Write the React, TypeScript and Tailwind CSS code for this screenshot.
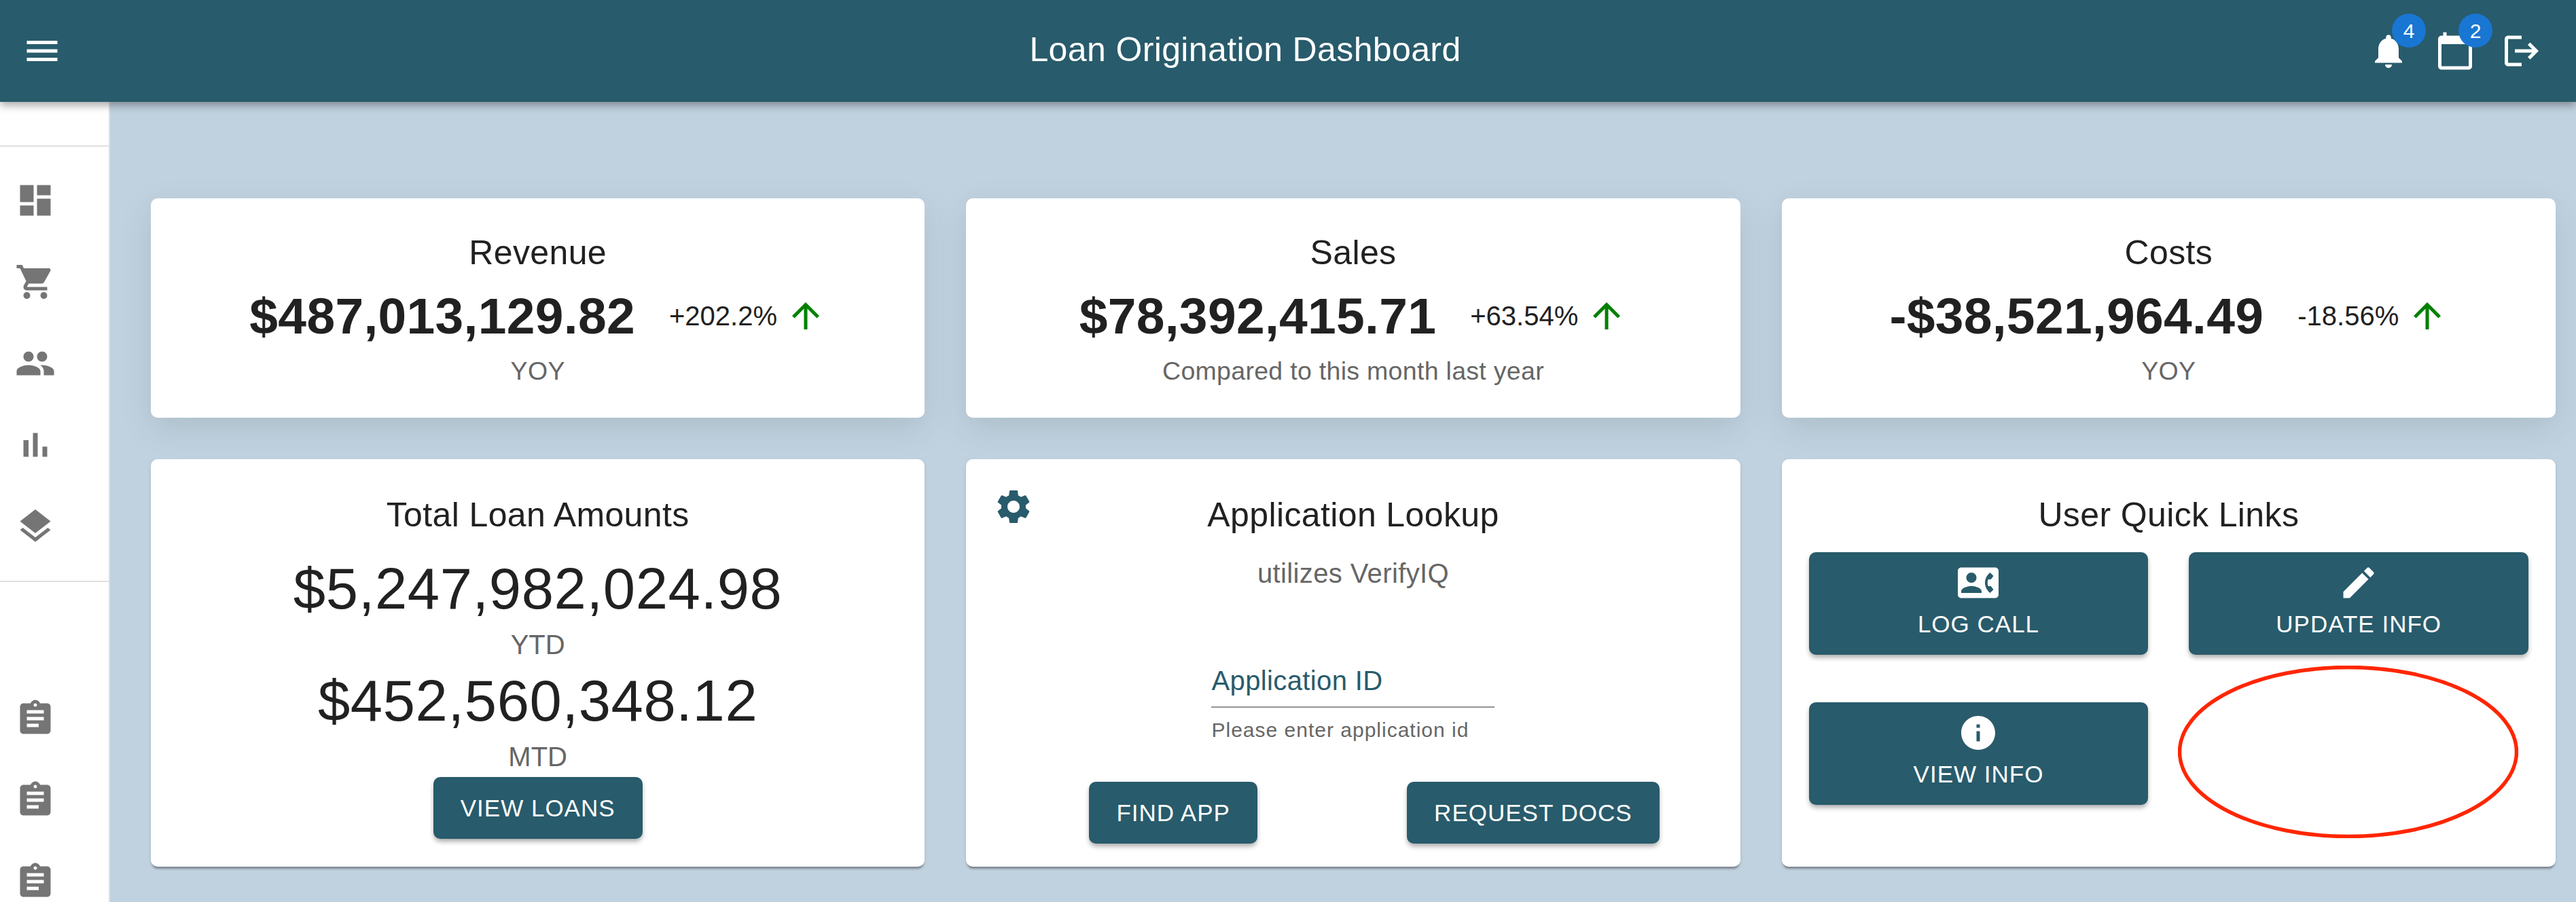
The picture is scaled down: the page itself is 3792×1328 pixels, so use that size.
const TEAL = 'bg-[#285b6b]'

const ICONS = {
  menu: 'M3 18h18v-2H3v2zm0-5h18v-2H3v2zm0-7v2h18V6H3z',
  bell: 'M12 22c1.1 0 2-.9 2-2h-4c0 1.1.89 2 2 2zm6-6v-5c0-3.07-1.64-5.64-4.5-6.32V4c0-.83-.67-1.5-1.5-1.5s-1.5.67-1.5 1.5v.68C7.63 5.36 6 7.92 6 11v5l-2 2v1h16v-1l-2-2z',
  calendar: 'M20 3h-1V1h-2v2H7V1H5v2H4c-1.1 0-2 .9-2 2v16c0 1.1.9 2 2 2h16c1.1 0 2-.9 2-2V5c0-1.1-.9-2-2-2zm0 18H4V8h16v13z',
  logout: 'm17 7-1.41 1.41L18.17 11H8v2h10.17l-2.58 2.58L17 17l5-5zM4 5h8V3H4c-1.1 0-2 .9-2 2v14c0 1.1.9 2 2 2h8v-2H4V5z',
  dashboard: 'M3 13h8V3H3v10zm0 8h8v-6H3v6zm10 0h8V11h-8v10zm0-18v6h8V3h-8z',
  cart: 'M7 18c-1.1 0-1.99.9-1.99 2S5.9 22 7 22s2-.9 2-2-.9-2-2-2zM1 2v2h2l3.6 7.59-1.35 2.45c-.16.28-.25.61-.25.96 0 1.1.9 2 2 2h12v-2H7.42c-.14 0-.25-.11-.25-.25l.03-.12.9-1.63h7.45c.75 0 1.41-.41 1.75-1.03l3.58-6.49c.08-.14.12-.31.12-.48 0-.55-.45-1-1-1H5.21l-.94-2H1zm16 16c-1.1 0-1.99.9-1.99 2s.89 2 1.99 2 2-.9 2-2-.9-2-2-2z',
  people: 'M16 11c1.66 0 2.99-1.34 2.99-3S17.66 5 16 5c-1.66 0-3 1.34-3 3s1.34 3 3 3zm-8 0c1.66 0 2.99-1.34 2.99-3S9.66 5 8 5C6.34 5 5 6.34 5 8s1.34 3 3 3zm0 2c-2.33 0-7 1.17-7 3.5V19h14v-2.5c0-2.33-4.67-3.5-7-3.5zm8 0c-.29 0-.62.02-.97.05 1.16.84 1.97 1.97 1.97 3.45V19h6v-2.5c0-2.33-4.67-3.5-7-3.5z',
  chart: 'M5 9.2h3V19H5zM10.6 5h2.8v14h-2.8zm5.6 8H19v6h-2.8z',
  layers: 'M11.99 18.54l-7.37-5.73L3 14.07l9 7 9-7-1.63-1.27-7.38 5.74zM12 16l7.36-5.73L21 9l-9-7-9 7 1.63 1.27L12 16z',
  assignment: 'M19 3h-4.18C14.4 1.84 13.3 1 12 1c-1.3 0-2.4.84-2.82 2H5c-1.1 0-2 .9-2 2v14c0 1.1.9 2 2 2h14c1.1 0 2-.9 2-2V5c0-1.1-.9-2-2-2zm-7 0c.55 0 1 .45 1 1s-.45 1-1 1-1-.45-1-1 .45-1 1-1zm2 14H7v-2h7v2zm3-4H7v-2h10v2zm0-4H7V7h10v2z',
  settings: 'M19.14 12.94c.04-.3.06-.61.06-.94 0-.32-.02-.64-.07-.94l2.03-1.58c.18-.14.23-.41.12-.61l-1.92-3.32c-.12-.22-.37-.29-.59-.22l-2.39.96c-.5-.38-1.03-.7-1.62-.94l-.36-2.54c-.04-.24-.24-.41-.48-.41h-3.84c-.24 0-.43.17-.47.41l-.36 2.54c-.59.24-1.13.57-1.62.94l-2.39-.96c-.22-.08-.47 0-.59.22L2.74 8.87c-.12.21-.08.47.12.61l2.03 1.58c-.05.3-.09.63-.09.94s.02.64.07.94l-2.03 1.58c-.18.14-.23.41-.12.61l1.92 3.32c.12.22.37.29.59.22l2.39-.96c.5.38 1.03.7 1.62.94l.36 2.54c.05.24.24.41.48.41h3.84c.24 0 .44-.17.47-.41l.36-2.54c.59-.24 1.13-.56 1.62-.94l2.39.96c.22.08.47 0 .59-.22l1.92-3.32c.12-.22.07-.47-.12-.61l-2.01-1.58zM12 15.6c-1.98 0-3.6-1.62-3.6-3.6s1.62-3.6 3.6-3.6 3.6 1.62 3.6 3.6-1.62 3.6-3.6 3.6z',
  contactPhone: 'M22 3H2C.9 3 0 3.9 0 5v14c0 1.1.9 2 2 2h20c1.1 0 1.99-.9 1.99-2L24 5c0-1.1-.9-2-2-2zM8 6c1.66 0 3 1.34 3 3s-1.34 3-3 3-3-1.34-3-3 1.34-3 3-3zm6 12H2v-1c0-2 4-3.1 6-3.1s6 1.1 6 3.1v1zm3.85-4h1.64L21 16l-1.99 1.99c-1.31-.98-2.28-2.38-2.73-3.99-.18-.64-.28-1.31-.28-2s.1-1.36.28-2c.45-1.62 1.42-3.01 2.73-3.99L21 8l-1.51 2h-1.64c-.22.63-.35 1.3-.35 2s.13 1.37.35 2z',
  edit: 'M3 17.25V21h3.75L17.81 9.94l-3.75-3.75L3 17.25zM20.71 7.04c.39-.39.39-1.02 0-1.41l-2.34-2.34a.9959.9959 0 0 0-1.41 0l-1.83 1.83 3.75 3.75 1.83-1.83z',
  info: 'M12 2C6.48 2 2 6.48 2 12s4.48 10 10 10 10-4.48 10-10S17.52 2 12 2zm1 15h-2v-6h2v6zm0-8h-2V7h2v2z',
  arrowUp: 'M4 12l1.41 1.41L11 7.83V20h2V7.83l5.58 5.59L20 12l-8-8-8 8z',
}

function Icon({ d, className }: { d: string; className?: string }) {
  return (
    <svg viewBox="0 0 24 24" fill="currentColor" className={`h-[60px] w-[60px] shrink-0 ${className ?? ''}`}>
      <path d={d} />
    </svg>
  )
}

function Badge({ n }: { n: number }) {
  return (
    <span className="absolute -top-[25px] left-[35px] flex h-[50px] w-[50px] items-center justify-center rounded-full bg-[#1976d2] text-[30px] text-white">
      {n}
    </span>
  )
}

function Header() {
  return (
    <header className={`relative z-10 flex h-[150px] items-center pr-[50px] pl-[32px] shadow-[0_5px_12px_rgba(0,0,0,0.35)] ${TEAL} text-white`}>
      <Icon d={ICONS.menu} />
      <h1 className="flex-1 pb-[4px] pl-[88px] text-center text-[50px] leading-[1.6] tracking-[0.375px]">
        Loan Origination Dashboard
      </h1>
      <div className="flex gap-[38px]">
        <div className="relative">
          <Icon d={ICONS.bell} />
          <Badge n={4} />
        </div>
        <div className="relative">
          <Icon d={ICONS.calendar} />
          <Badge n={2} />
        </div>
        <Icon d={ICONS.logout} />
      </div>
    </header>
  )
}

function NavItem({ d }: { d: string }) {
  return (
    <div className="flex h-[120px] items-center pl-[22px] text-[#757575]">
      <Icon d={d} />
    </div>
  )
}

function Sidebar() {
  return (
    <aside className="w-[162px] shrink-0 border-r-2 border-[#dde1e5] bg-white">
      <div className="h-[66px] border-b-2 border-[#e0e0e0]" />
      <div className="border-b-2 border-[#e0e0e0] pt-[19px] pb-[20px]">
        <NavItem d={ICONS.dashboard} />
        <NavItem d={ICONS.cart} />
        <NavItem d={ICONS.people} />
        <NavItem d={ICONS.chart} />
        <NavItem d={ICONS.layers} />
      </div>
      <div className="pt-[141px]">
        <NavItem d={ICONS.assignment} />
        <NavItem d={ICONS.assignment} />
        <NavItem d={ICONS.assignment} />
      </div>
    </aside>
  )
}

function Title({ children }: { children: React.ReactNode }) {
  return <h2 className="text-center text-[50px] leading-[80px] tracking-[0.375px] text-[#212121]">{children}</h2>
}

function StatCard({ title, value, change, note }: { title: string; value: string; change: string; note: string }) {
  return (
    <section className="rounded-[10px] bg-white px-[40px] pt-[40px] pb-[38px] shadow-[0_15px_50px_rgba(0,0,0,0.1)]">
      <Title>{title}</Title>
      <div className="flex h-[104px] items-center justify-center pt-[2px] text-[#212121]">
        <span className="text-[75px] leading-none font-bold tracking-[0.3px]">{value}</span>
        <span className="ml-[50px] text-[40px] leading-none">{change}</span>
        <Icon d={ICONS.arrowUp} className="ml-[12px] text-[#008000]" />
      </div>
      <p className="text-center text-[37.5px] leading-[61px] tracking-[0.3px] text-[#666666]">{note}</p>
    </section>
  )
}

function Button({ children, className }: { children: React.ReactNode; className?: string }) {
  return (
    <button className={`rounded-[10px] px-[40px] py-[15px] text-[35px] leading-[61px] tracking-[1px] text-white shadow-[0_5px_8px_-2px_rgba(0,0,0,0.3),0_4px_6px_rgba(0,0,0,0.1)] ${TEAL} ${className ?? ''}`}>
      {children}
    </button>
  )
}

function QuickLink({ d, label }: { d: string; label: string }) {
  return (
    <Button className="flex flex-col items-center">
      <Icon d={d} />
      {label}
    </Button>
  )
}

function Amount({ value, note }: { value: string; note: string }) {
  return (
    <>
      <p className="text-center text-[85px] leading-[105px] tracking-[0.625px] text-[#212121]">{value}</p>
      <p className="text-center text-[40px] leading-[60px] text-[#666666]">{note}</p>
    </>
  )
}

export default function App() {
  return (
    <div className="flex h-[1328px] flex-col overflow-hidden bg-[#c0d2e0] font-['Liberation_Sans',Arial,sans-serif]">
      <Header />
      <div className="flex min-h-0 flex-1">
        <Sidebar />
        <main className="flex-1 pt-[142px] pr-[30px] pl-[60px]">
          <div className="grid grid-cols-3 gap-[61px]">
            <StatCard title="Revenue" value="$487,013,129.82" change="+202.2%" note="YOY" />
            <StatCard title="Sales" value="$78,392,415.71" change="+63.54%" note="Compared to this month last year" />
            <StatCard title="Costs" value="-$38,521,964.49" change="-18.56%" note="YOY" />

            <section className="flex h-[600px] flex-col items-stretch rounded-[10px] bg-white px-[40px] pt-[42px] shadow-[0_5px_3px_-2px_rgba(0,0,0,0.3),0_2px_5px_rgba(0,0,0,0.12)]">
              <Title>Total Loan Amounts</Title>
              <div className="mt-[16px]">
                <Amount value="$5,247,982,024.98" note="YTD" />
                <Amount value="$452,560,348.12" note="MTD" />
              </div>
              <div className="flex justify-center">
                <Button>VIEW LOANS</Button>
              </div>
            </section>

            <section className="relative flex h-[600px] flex-col rounded-[10px] bg-white px-[40px] pt-[42px] shadow-[0_5px_3px_-2px_rgba(0,0,0,0.3),0_2px_5px_rgba(0,0,0,0.12)]">
              <Icon d={ICONS.settings} className="absolute top-[40px] left-[40px] text-[#285b6b]" />
              <Title>Application Lookup</Title>
              <p className="mt-[16px] text-center text-[40px] leading-[60px] tracking-[0.375px] text-[#666666]">utilizes VerifyIQ</p>
              <div className="mx-auto mt-[98px] w-[417px]">
                <div className="h-[70px] border-b-2 border-[#949494] text-[40px] leading-[60px] tracking-[0.375px] text-[#285b6b]">
                  Application ID
                </div>
                <p className="mt-[15px] text-[30px] leading-[36px] tracking-[1px] text-[#666666]">Please enter application id</p>
              </div>
              <div className="mt-[58px] grid grid-cols-2 justify-items-center">
                <Button>FIND APP</Button>
                <Button>REQUEST DOCS</Button>
              </div>
            </section>

            <section className="relative h-[600px] rounded-[10px] bg-white px-[40px] pt-[42px] shadow-[0_5px_3px_-2px_rgba(0,0,0,0.3),0_2px_5px_rgba(0,0,0,0.12)]">
              <Title>User Quick Links</Title>
              <div className="mt-[15px] grid grid-cols-2 gap-x-[60px] gap-y-[70px]">
                <QuickLink d={ICONS.contactPhone} label="LOG CALL" />
                <QuickLink d={ICONS.edit} label="UPDATE INFO" />
                <QuickLink d={ICONS.info} label="VIEW INFO" />
              </div>
              <svg viewBox="0 0 501 254" fill="none" className="absolute top-[304px] left-[583px] h-[254px] w-[501px]">
                <ellipse cx="250.5" cy="127" rx="248" ry="124.5" stroke="#ff2600" strokeWidth="5.5" />
              </svg>
            </section>
          </div>
        </main>
      </div>
    </div>
  )
}
